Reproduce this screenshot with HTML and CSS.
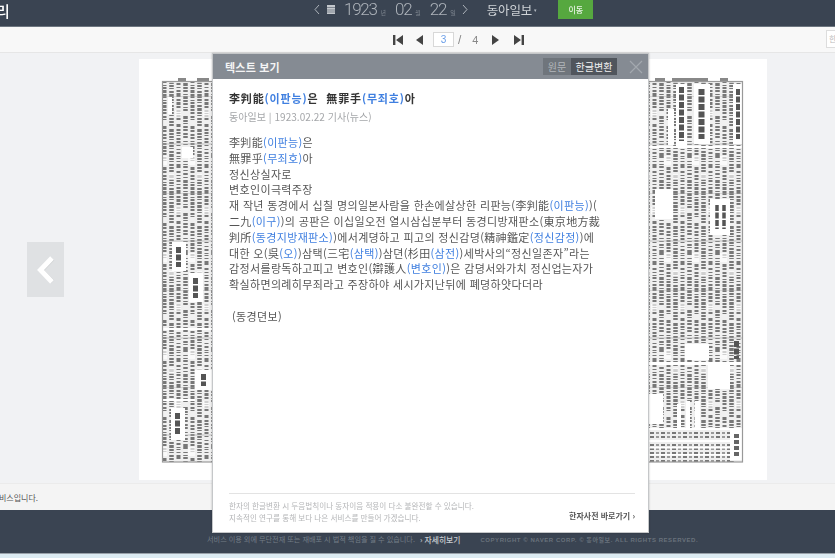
FILE: index.html
```html
<!DOCTYPE html>
<html lang="ko">
<head>
<meta charset="utf-8">
<title>텍스트 보기</title>
<link rel="stylesheet" href="styles.css">
</head>
<body>
<div class="page">
  <header class="topbar">
    <span class="brand">리</span>
    <div class="datebar">
      <svg class="chev" width="6" height="11" viewBox="0 0 6 11"><path d="M5 1 1 5.500 5 10" fill="none" stroke="#aeb4bb"/></svg>
      <svg class="cal" width="8" height="9" viewBox="0 0 8 9"><rect width="8" height="9" fill="#c4c8cd"/><path d="M0 2.500h8M0 5h8M0 7h8" stroke="#3a4452" stroke-width=".5"/></svg>
      <span class="num">1923</span><small>년</small>
      <span class="num">02</span><small>월</small>
      <span class="num">22</span><small>일</small>
      <svg class="chev r" width="6" height="11" viewBox="0 0 6 11"><path d="M1 1l4 4.500L1 10" fill="none" stroke="#aeb4bb"/></svg>
      <span class="paper">동아일보</span><span class="caret">▾</span>
      <span class="go">이동</span>
    </div>
  </header>
  <nav class="pager">
    <svg width="10" height="10" viewBox="0 0 10 10"><path d="M0 0h2.400v10H0zM10 0v10L3 5z" fill="#444"/></svg>
    <svg class="gap1" width="7" height="10" viewBox="0 0 7 10"><path d="M7 0v10L0 5z" fill="#444"/></svg>
    <span class="cur">3</span>
    <span class="slash">/</span>
    <span class="tot">4</span>
    <svg class="gap2" width="7" height="10" viewBox="0 0 7 10"><path d="M0 0v10l7-5z" fill="#444"/></svg>
    <svg class="gap3" width="10" height="10" viewBox="0 0 10 10"><path d="M10 0H7.600v10H10zM0 0v10l7-5z" fill="#444"/></svg>
    <span class="search">한</span>
  </nav>
  <main class="viewer">
    <a class="prev"><svg width="20" height="30" viewBox="0 0 20 30"><path d="M16.500 3.500 5 15.500l11.500 11.500" fill="none" stroke="#cfd1d3" stroke-width="5"/><path d="M16 3 4.500 15 16 27" fill="none" stroke="#fff" stroke-width="5"/></svg></a>
    <div class="sheet">
      <svg class="news" width="584" height="386" viewBox="160 78 584 386">
        <defs>
          <pattern id="col" width="28" height="97" patternUnits="userSpaceOnUse">
            <rect width="28" height="97" fill="#f0f0f0"/>
            <g stroke="#777" fill="none">
              <path d="M3.500 0v97" stroke-width="4.500" stroke-dasharray="2 1 2 1 1 2 2 1 3 1 2 1 1 2 2 1 2 1 2 3 3 1 2 1 2 1 1 2"/>
              <path d="M10.500 0v97" stroke-width="4" stroke-dasharray="1 2 2 1 3 1 2 2 2 1 1 1 2 1 2 4 3 2 2 1 2 1 1 2 2"/>
              <path d="M17.500 0v97" stroke-width="4.500" stroke-dasharray="3 1 2 1 2 2 1 1 2 5 3 1 2 1 1 2 2 1 2 2 2 1 2"/>
              <path d="M24.500 0v97" stroke-width="4" stroke-dasharray="2 2 1 1 2 1 3 1 2 1 2 2 2 1 1 6 3 1 2 2 2 1"/>
            </g>
            <path d="M0 0h28M0 48h28" stroke="#aaa" stroke-width=".7"/>
            <g fill="#fff" opacity=".65">
              <rect x="7" y="14" width="6" height="7"/><rect x="20" y="60" width="7" height="9"/><rect x="1" y="78" width="5" height="6"/>
            </g>
          </pattern>
          <pattern id="ad" width="11" height="4" patternUnits="userSpaceOnUse">
            <rect width="11" height="4" fill="#eee"/>
            <rect x="1" y="1" width="4" height="2" fill="#777"/><rect x="7" y="1" width="3" height="2" fill="#999"/>
          </pattern>
        </defs>
        <rect x="162" y="82" width="581" height="381" fill="url(#col)"/>
        <g fill="#888"><rect x="178" y="79" width="8" height="3"/><rect x="197" y="79" width="12" height="3"/><rect x="655" y="79" width="10" height="3"/><rect x="672" y="79" width="36" height="3"/><rect x="720" y="79" width="8" height="3"/></g>
        <g fill="#fff">
          <rect x="168" y="98" width="4" height="17"/><rect x="182" y="148" width="11" height="11"/>
          <rect x="172" y="243" width="14" height="29"/><rect x="189" y="274" width="14" height="29"/>
          <rect x="163" y="329" width="49" height="2"/><rect x="163" y="400" width="32" height="2"/>
          <rect x="171" y="409" width="14" height="32"/><rect x="195" y="371" width="17" height="20"/>
          <rect x="676" y="85" width="11" height="62"/><rect x="694" y="85" width="16" height="60"/>
          <rect x="668" y="110" width="6" height="36"/><rect x="733" y="85" width="9" height="60"/>
          <rect x="648" y="147" width="95" height="2"/><rect x="655" y="190" width="18" height="30"/>
          <rect x="710" y="200" width="20" height="36"/><rect x="648" y="363" width="95" height="3"/>
          <rect x="685" y="345" width="24" height="16"/><rect x="708" y="366" width="22" height="24"/>
          <rect x="648" y="395" width="15" height="30"/><rect x="677" y="405" width="4" height="25"/>
          <rect x="686" y="402" width="4" height="28"/><rect x="695" y="402" width="5" height="28"/>
        </g>
        <g stroke="#555" fill="none" stroke-dasharray="6 1.500">
          <path d="M681.500 88v54" stroke-width="5"/><path d="M701.500 90v50" stroke-width="6"/><path d="M738 90v50" stroke-width="4"/>
          <path d="M736.500 342v18" stroke-width="5"/>
          <path d="M178.500 248v20" stroke-width="5"/><path d="M195.500 279v20" stroke-width="5"/>
          <path d="M177.500 414v22" stroke-width="5"/><path d="M203.500 375v12" stroke-width="5"/>
          <path d="M717 206v24" stroke-width="3.500"/><path d="M724 206v24" stroke-width="3.500"/>
        </g>
        <rect x="648" y="430" width="82" height="33" fill="url(#ad)"/>
        <g fill="#fff"><rect x="648" y="429" width="95" height="2"/><rect x="648" y="441" width="82" height="2"/><rect x="648" y="448" width="82" height="1.500"/><rect x="648" y="455" width="82" height="1.500"/><rect x="730" y="431" width="12" height="30"/></g>
        <path d="M736.500 435v22" stroke="#666" stroke-width="5" stroke-dasharray="4 2"/>
        <rect x="162.500" y="82.500" width="580" height="380.500" fill="none" stroke="#999" stroke-width="1.200"/>
      </svg>
    </div>
  </main>
  <div class="notice"><span>비스입니다.</span></div>
  <footer class="footer">
    <span>서비스 이용 외에 무단전재 또는 재배포 시 법적 책임을 질 수 있습니다.</span>
    <b>› 자세히보기</b>
    <em>COPYRIGHT © NAVER CORP. © 동아일보. ALL RIGHTS RESERVED.</em>
  </footer>
  <div class="strip"></div>

  <section class="modal">
    <div class="m-head">
      <h2>텍스트 보기</h2>
      <div class="tabs"><span class="tab">원문</span><span class="tab on">한글변환</span></div>
      <svg class="close" width="14" height="14" viewBox="0 0 14 14"><path d="M1 1l12 12M13 1 1 13" stroke="#a3a8ae" stroke-width="1.200"/></svg>
    </div>
    <div class="m-body">
      <h3>李判能<i>(이판능)</i>은 &nbsp;無罪手<i>(무죄호)</i>아</h3>
      <p class="meta">동아일보 | 1923.02.22 기사(뉴스)</p>
      <div class="text">
        <p>李判能<i>(이판능)</i>은</p>
        <p>無罪乎<i>(무죄호)</i>아</p>
        <p>정신상실자로</p>
        <p>변호인이극력주장</p>
        <p>재 작년 동경에서 십칠 명의일본사람을 한손에살상한 리판능(李判能<i>(이판능)</i>)(</p>
        <p>二九<i>(이구)</i>)의 공판은 이십일오전 열시삼십분부터 동경디방재판소(東京地方裁</p>
        <p>判所<i>(동경지방재판소)</i>)에서계뎡하고 피고의 정신감뎡(精神鑑定<i>(정신감정)</i>)에</p>
        <p>대한 오(吳<i>(오)</i>)삼택(三宅<i>(삼택)</i>)삼뎐(杉田<i>(삼전)</i>)세박사의“정신일존자”라는</p>
        <p>감정서를랑독하고피고 변호인(辯護人<i>(변호인)</i>)은 감뎡서와가치 정신업는자가</p>
        <p>확실하면의례히무죄라고 주장하야 세시가지난뒤에 폐뎡하얏다더라</p>
        <p class="src">(동경뎐보)</p>
      </div>
    </div>
    <div class="m-foot">
      <p>한자의 한글변환 시 두음법칙이나 동자이음 적용이 다소 불완전할 수 있습니다.<br>지속적인 연구를 통해 보다 나은 서비스를 만들어 가겠습니다.</p>
      <b>한자사전 바로가기 ›</b>
    </div>
  </section>
</div>
</body>
</html>
```
FILE: styles.css
```css
* { box-sizing: border-box; }
html, body { margin: 0; height: 100%; overflow: hidden; }
body { font-family: "Noto Sans CJK KR", "Noto Sans", sans-serif; background: #f0f1f3; }
.page { position: relative; width: 835px; height: 558px; display: flex; flex-direction: column; overflow: hidden; filter: blur(.5px); }
.topbar { height: 27px; flex: none; background: #3a4452; border-bottom: 1px solid #6d7680; position: relative; color: #dfe2e5; }
.brand { position: absolute; left: -4px; top: 0; font-size: 15px; line-height: 22px; color: #fff; font-weight: 500; }
.datebar { position: absolute; left: 314px; top: 0; height: 19px; display: flex; align-items: center; white-space: nowrap; }
.cal { margin: 0 9px 0 7px; }
.chev.r { margin-left: -3px; }
.num { font-family: Roboto, sans-serif; font-weight: 300; font-size: 17px; letter-spacing: -1.300px; color: #aeb4bb; line-height: 19px; }
small { font-size: 6px; color: #7e868f; margin: 5px 9px 0 4px; }
.paper { margin-left: 19px; font-size: 12.500px; color: #cfd3d7; letter-spacing: -.1px; }
.caret { font-size: 5px; color: #b4bac1; margin-left: 2px; }
.go { width: 35px; height: 19px; margin-left: 21px; background: #56a83f; color: #e8f3e4; font-size: 8px; font-weight: 500; text-align: center; line-height: 19px; }
.pager { height: 26px; flex: none; background: #f8f8f8; border-bottom: 1px solid #e6e6e6; display: flex; align-items: center; padding-left: 393px; position: relative; }
.gap1 { margin-left: 13px; }
.gap2 { margin-left: 14px; }
.gap3 { margin-left: 15px; }
.cur { width: 21px; height: 15px; margin-left: 10px; background: #fff; border: 1px solid #d8d8d8; color: #6a9ee8; font: 10px/13px "Liberation Sans", sans-serif; text-align: center; }
.slash { margin-left: 4px; font: 12px "Liberation Sans", sans-serif; color: #888; }
.tot { margin-left: 11px; font: 11px "Liberation Sans", sans-serif; color: #888; white-space: nowrap; }
.search { position: absolute; left: 826px; top: 3px; width: 20px; height: 18px; background: #fff; border: 1px solid #ddd; font-size: 8px; color: #bbb; padding-left: 2px; line-height: 16px; }
.viewer { height: 430px; flex: none; background: #f1f2f4; position: relative; padding: 6px 0 0 139px; }
.prev { position: absolute; left: 27px; top: 189px; width: 37px; height: 55px; background: #dfe1e3; display: flex; align-items: center; justify-content: center; }
.sheet { width: 628px; height: 421px; background: #fff; padding: 18px 0 0 21px; }
.news { display: block; filter: blur(.7px); }
.notice { height: 27px; flex: none; background: #f4f4f4; border-top: 1px solid #ebebeb; font-size: 8px; color: #555; line-height: 28px; }
.notice span { display: block; margin-left: -1px; }
.footer { height: 43px; flex: none; background: #3a4452; display: flex; align-items: center; padding: 15px 0 0 207px; font-size: 7.150px; color: #737d87; white-space: nowrap; }
.footer b { color: #c8ccd1; font-size: 7.800px; font-weight: 500; margin-left: 5px; }
.footer em { font: bold 6px "Liberation Sans", "Noto Sans CJK KR", sans-serif; letter-spacing: .55px; margin-left: 20px; color: #69727c; }
.strip { flex: 1; background: #dcebf2; border-top: 1px solid #9aa2aa; }
.modal { position: absolute; left: 212px; top: 53px; width: 437px; height: 480px; background: #fff; border: 1px solid #c5c7c9; box-shadow: 0 0 2px rgba(0,0,0,.25); display: flex; flex-direction: column; }
.m-head { height: 25px; flex: none; background: #858b93; display: flex; align-items: center; padding: 0 5px 0 12px; }
.m-head h2 { margin: 0; flex: 1; font-size: 11px; font-weight: 700; color: #f4f4f5; letter-spacing: .2px; }
.tabs { display: flex; height: 17px; font-size: 10px; line-height: 17px; text-align: center; }
.tab { width: 28px; background: #6f757c; color: #b3b7bb; }
.tab.on { width: 46px; background: #50555c; color: #f2f2f2; }
.close { margin-left: 12px; }
.m-body { flex: 1; padding: 9px 0 0 16px; color: #444; }
.m-body i { font-style: normal; color: #3f7fe0; }
.m-body h3 { margin: 0; font-size: 11px; line-height: 20px; font-weight: 700; color: #333; white-space: nowrap; letter-spacing: .85px; }
.meta { margin: 2px 0 0; font-size: 10px; line-height: 14px; color: #a4a6a9; letter-spacing: .05px; }
.text { margin-top: 11px; font-size: 11px; line-height: 15.800px; color: #555; white-space: nowrap; letter-spacing: .35px; }
.text p { margin: 0; }
.text .src { margin: 15.800px 0 0 3px; }
.m-foot { flex: none; margin: 0 13px 4px 16px; border-top: 1px solid #e3e3e3; display: flex; justify-content: space-between; align-items: flex-end; padding-bottom: 4px; }
.m-foot p { margin: 0; font-size: 7.600px; line-height: 12px; color: #b5b6b8; padding-top: 6px; }
.m-foot b { font-size: 8px; font-weight: 700; color: #555; line-height: 12px; padding-bottom: 2px; }
```
